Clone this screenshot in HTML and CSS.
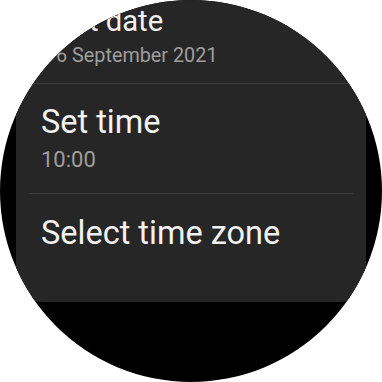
FILE: index.html
```html
<!DOCTYPE html>
<html>
<head>
<meta charset="utf-8">
<link rel="stylesheet" href="styles.css">
</head>
<body>
<div class="screen">
  <div class="card">
    <div class="row row-scaled">
      <div class="title">Set date</div>
      <div class="sub">6 September 2021</div>
    </div>
    <div class="divider"></div>
    <div class="row">
      <div class="title">Set time</div>
      <div class="sub">10:00</div>
    </div>
    <div class="divider"></div>
    <div class="row row-last">
      <div class="title">Select time zone</div>
    </div>
  </div>
</div>
</body>
</html>
```
FILE: styles.css
```css
html, body {
  margin: 0;
  padding: 0;
  background: #ffffff;
}
body {
  width: 382px;
  height: 382px;
  overflow: hidden;
  font-family: Roboto, "Noto Sans", sans-serif;
}
.screen {
  width: 382px;
  height: 382px;
  border-radius: 50%;
  background: #000000;
  overflow: hidden;
  display: flex;
  flex-direction: column;
}
.card {
  margin: -26px 16px 0 16px;
  background: #262626;
  border-radius: 27px;
  display: flex;
  flex-direction: column;
}
.row {
  padding: 19px 25px;
  display: flex;
  flex-direction: column;
}
.row-scaled {
  transform-origin: 50% 100%;
  transform: translateY(2px) scale(0.9);
}
.row-last {
  padding-top: 20px;
  padding-bottom: 50px;
}
.title {
  font-size: 32.5px;
  line-height: 38px;
  color: #f2f2f2;
  white-space: nowrap;
}
.sub {
  margin-top: 5px;
  font-size: 22px;
  line-height: 28px;
  color: #9e9e9e;
  white-space: nowrap;
}
.divider {
  height: 1px;
  margin: 0 13px;
  background: #3a3a3a;
}
```
